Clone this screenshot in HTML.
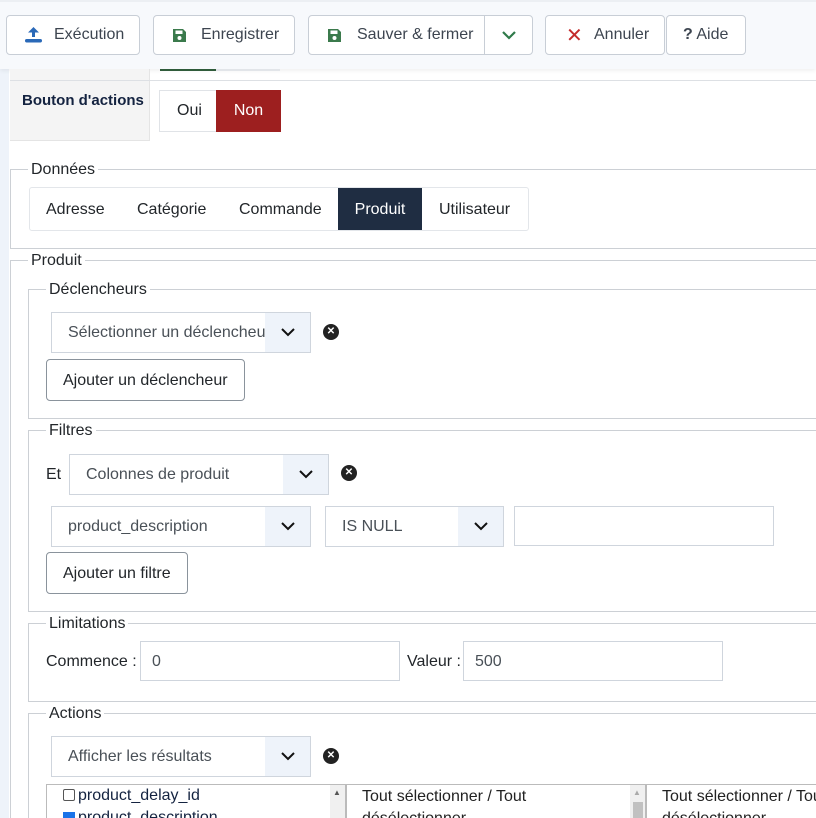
<!DOCTYPE html>
<html><head><meta charset="utf-8"><style>
*{box-sizing:border-box;margin:0;padding:0}
html,body{width:816px;height:818px;overflow:hidden;background:#fff}
#w{position:relative;width:816px;height:818px;overflow:hidden;font-family:"Liberation Sans",Arial,sans-serif;font-size:16px;color:#22262a}
.a{position:absolute}
.btn{position:absolute;top:15px;height:40px;border:1px solid #c8ced6;border-radius:4px;background:#fff;color:#3d4550;font-size:16px;display:flex;align-items:center}
.fs{position:absolute;border:1px solid #ccd0d5;right:0;border-right:none}
.lg{position:absolute;background:#fff;padding:0 3px;font-size:16px;color:#22262a;line-height:18px}
.sel{position:absolute;height:41px;border:1px solid #cfd5dd;background:#fff;color:#495057;font-size:16px;line-height:40px;padding-left:16px;overflow:hidden;white-space:nowrap}
.sel .ar{position:absolute;right:0;top:0;bottom:0;width:45px;background:#eef3fa}
.sel .ar svg{position:absolute;left:15px;top:14px}
.inp{position:absolute;height:40px;border:1px solid #cfd5dd;background:#fff;color:#495057;line-height:39px;padding-left:11px}
.xb{position:absolute;width:16px;height:16px;border-radius:50%;background:#222;color:#fff;font-size:10px;font-weight:bold;text-align:center;line-height:16px}
.ob{position:absolute;height:42px;border:1px solid #8a939c;border-radius:4px;background:#fff;color:#22262a;line-height:41px;padding:0 16px}
</style></head><body><div id="w">
<div class="a" style="left:0;top:0;width:9px;height:818px;background:#eef3fa"></div>
<div class="a" style="left:0;top:0;width:816px;height:69px;background:#f7f9fc;border-top:2px solid #eceff3;box-shadow:0 2px 4px rgba(0,0,0,.06)"></div>

<div class="btn" style="left:6px;width:134px"><svg class="a" style="left:17px;top:10px" width="19" height="18" viewBox="0 0 19 18"><path d="M9.5 1 L4 6.5 H8 V11 H11 V6.5 H15 Z" fill="#2a69b8"/><rect x="1" y="13" width="17" height="3.5" rx="1.7" fill="#2a69b8"/></svg><span class="a" style="left:47px;top:10px">Exécution</span></div>
<div class="btn" style="left:153px;width:142px"><svg class="a" style="left:18px;top:12px" width="15" height="15" viewBox="0 0 15 15"><path d="M1 1h10l3 3v10H1z" fill="#3b7a4c"/><rect x="3.5" y="2.5" width="7" height="3.5" fill="#fff"/><circle cx="7.5" cy="10" r="2" fill="#fff"/></svg><span class="a" style="left:47px;top:10px">Enregistrer</span></div>
<div class="btn" style="left:308px;width:225px"><svg class="a" style="left:18px;top:12px" width="15" height="15" viewBox="0 0 15 15"><path d="M1 1h10l3 3v10H1z" fill="#3b7a4c"/><rect x="3.5" y="2.5" width="7" height="3.5" fill="#fff"/><circle cx="7.5" cy="10" r="2" fill="#fff"/></svg><span class="a" style="left:48px;top:10px">Sauver &amp; fermer</span><div class="a" style="left:175px;top:0;bottom:0;border-left:1px solid #c8ced6;width:48px"><svg class="a" style="left:16px;top:14px" width="16" height="11" viewBox="0 0 16 11"><path d="M2 2l6 6 6-6" stroke="#2f7a4a" stroke-width="2.2" fill="none"/></svg></div></div>
<div class="btn" style="left:545px;width:120px"><span class="a" style="left:20px;top:7px;color:#c42b2b;font-size:20px">✕</span><span class="a" style="left:48px;top:10px">Annuler</span></div>
<div class="btn" style="left:666px;width:80px"><span class="a" style="left:16px;top:10px"><b>?</b> Aide</span></div>

<div class="a" style="left:160px;top:69px;width:56px;height:2px;background:#2f5b3a"></div>
<div class="a" style="left:216px;top:69px;width:64px;height:2px;background:#e2e5e9"></div>
<div class="a" style="left:10px;top:69px;width:140px;height:72px;background:#f4f4f4;border-right:1px solid #e4e4e4;border-bottom:1px solid #e4e4e4"></div>
<div class="a" style="left:10px;top:80px;width:806px;height:1px;background:#dde0e4"></div>
<div class="a" style="left:22px;top:92px;font-weight:bold;color:#142340;font-size:15px">Bouton d'actions</div>
<div class="a" style="left:159px;top:90px;width:122px;height:42px;border:1px solid #e0e3e7;background:#fff"></div>
<div class="a" style="left:177px;top:102px">Oui</div>
<div class="a" style="left:216px;top:90px;width:65px;height:42px;background:#9d1f1f;color:#fff;line-height:42px;text-align:center">Non</div>

<div class="fs" style="left:10px;top:169px;height:80px"></div>
<div class="lg" style="left:28px;top:161px">Données</div>
<div class="a" style="left:29px;top:187px;width:500px;height:44px;border:1px solid #e3e6ea;border-radius:3px;background:#fff"></div>
<div class="a" style="left:46px;top:201px">Adresse</div>
<div class="a" style="left:137px;top:201px">Catégorie</div>
<div class="a" style="left:239px;top:201px">Commande</div>
<div class="a" style="left:338px;top:188px;width:84px;height:42px;background:#1f2d42;color:#fff;line-height:43px;text-align:center">Produit</div>
<div class="a" style="left:439px;top:201px">Utilisateur</div>

<div class="fs" style="left:10px;top:260px;height:558px;border-bottom:none"></div>
<div class="lg" style="left:28px;top:252px">Produit</div>

<div class="fs" style="left:28px;top:289px;height:130px"></div>
<div class="lg" style="left:46px;top:281px">Déclencheurs</div>
<div class="sel" style="left:51px;top:312px;width:260px">Sélectionner un déclencheur<div class="ar"><svg width="16" height="11" viewBox="0 0 16 11"><path d="M2 2l6 6 6-6" stroke="#111" stroke-width="2" fill="none"/></svg></div></div>
<div class="xb" style="left:323px;top:324px">✕</div>
<div class="ob" style="left:46px;top:359px">Ajouter un déclencheur</div>

<div class="fs" style="left:28px;top:430px;height:182px"></div>
<div class="lg" style="left:46px;top:422px">Filtres</div>
<div class="a" style="left:46px;top:466px">Et</div>
<div class="sel" style="left:69px;top:454px;width:260px">Colonnes de produit<div class="ar"><svg width="16" height="11" viewBox="0 0 16 11"><path d="M2 2l6 6 6-6" stroke="#111" stroke-width="2" fill="none"/></svg></div></div>
<div class="xb" style="left:341px;top:465px">✕</div>
<div class="sel" style="left:51px;top:506px;width:260px">product_description<div class="ar"><svg width="16" height="11" viewBox="0 0 16 11"><path d="M2 2l6 6 6-6" stroke="#111" stroke-width="2" fill="none"/></svg></div></div>
<div class="sel" style="left:325px;top:506px;width:179px">IS NULL<div class="ar"><svg width="16" height="11" viewBox="0 0 16 11"><path d="M2 2l6 6 6-6" stroke="#111" stroke-width="2" fill="none"/></svg></div></div>
<div class="inp" style="left:514px;top:506px;width:260px"></div>
<div class="ob" style="left:46px;top:552px">Ajouter un filtre</div>

<div class="fs" style="left:28px;top:623px;height:79px"></div>
<div class="lg" style="left:46px;top:615px">Limitations</div>
<div class="a" style="left:46px;top:653px">Commence :</div>
<div class="inp" style="left:140px;top:641px;width:260px">0</div>
<div class="a" style="left:407px;top:653px">Valeur :</div>
<div class="inp" style="left:463px;top:641px;width:260px">500</div>

<div class="fs" style="left:28px;top:713px;height:105px;border-bottom:none"></div>
<div class="lg" style="left:46px;top:705px">Actions</div>
<div class="sel" style="left:51px;top:736px;width:260px">Afficher les résultats<div class="ar"><svg width="16" height="11" viewBox="0 0 16 11"><path d="M2 2l6 6 6-6" stroke="#111" stroke-width="2" fill="none"/></svg></div></div>
<div class="xb" style="left:323px;top:748px">✕</div>

<div class="a" style="left:46px;top:784px;width:300px;height:34px;border:1px solid #bbb;border-bottom:none;background:#fff;overflow:hidden"></div>
<div class="a" style="left:330px;top:785px;width:15px;height:33px;background:#f0f0f0"></div>
<div class="a" style="left:333px;top:788px;font-size:8px;color:#555">▲</div>
<div class="a" style="left:63px;top:789px;width:12px;height:12px;border:1px solid #555;border-radius:2px"></div>
<div class="a" style="left:78px;top:787px;color:#142340">product_delay_id</div>
<div class="a" style="left:63px;top:812px;width:12px;height:6px;background:#1a73e8"></div>
<div class="a" style="left:78px;top:809px;color:#142340;height:9px;overflow:hidden">product_description</div>
<div class="a" style="left:346px;top:784px;width:300px;height:34px;border:1px solid #bbb;border-bottom:none;background:#fff"></div>
<div class="a" style="left:630px;top:785px;width:15px;height:33px;background:#f0f0f0"></div>
<div class="a" style="left:633px;top:802px;width:10px;height:16px;background:#c1c1c1"></div>
<div class="a" style="left:633px;top:788px;font-size:8px;color:#aaa">▲</div>
<div class="a" style="left:362px;top:786px;color:#222;line-height:22px;width:260px;height:32px;overflow:hidden">Tout sélectionner / Tout désélectionner</div>
<div class="a" style="left:646px;top:784px;width:170px;height:34px;border:1px solid #bbb;border-bottom:none;border-right:none;background:#fff"></div>
<div class="a" style="left:662px;top:786px;color:#222;line-height:22px;width:154px;height:32px;overflow:hidden;white-space:nowrap">Tout sélectionner / Tout<br>désélectionner</div>
</div></body></html>
